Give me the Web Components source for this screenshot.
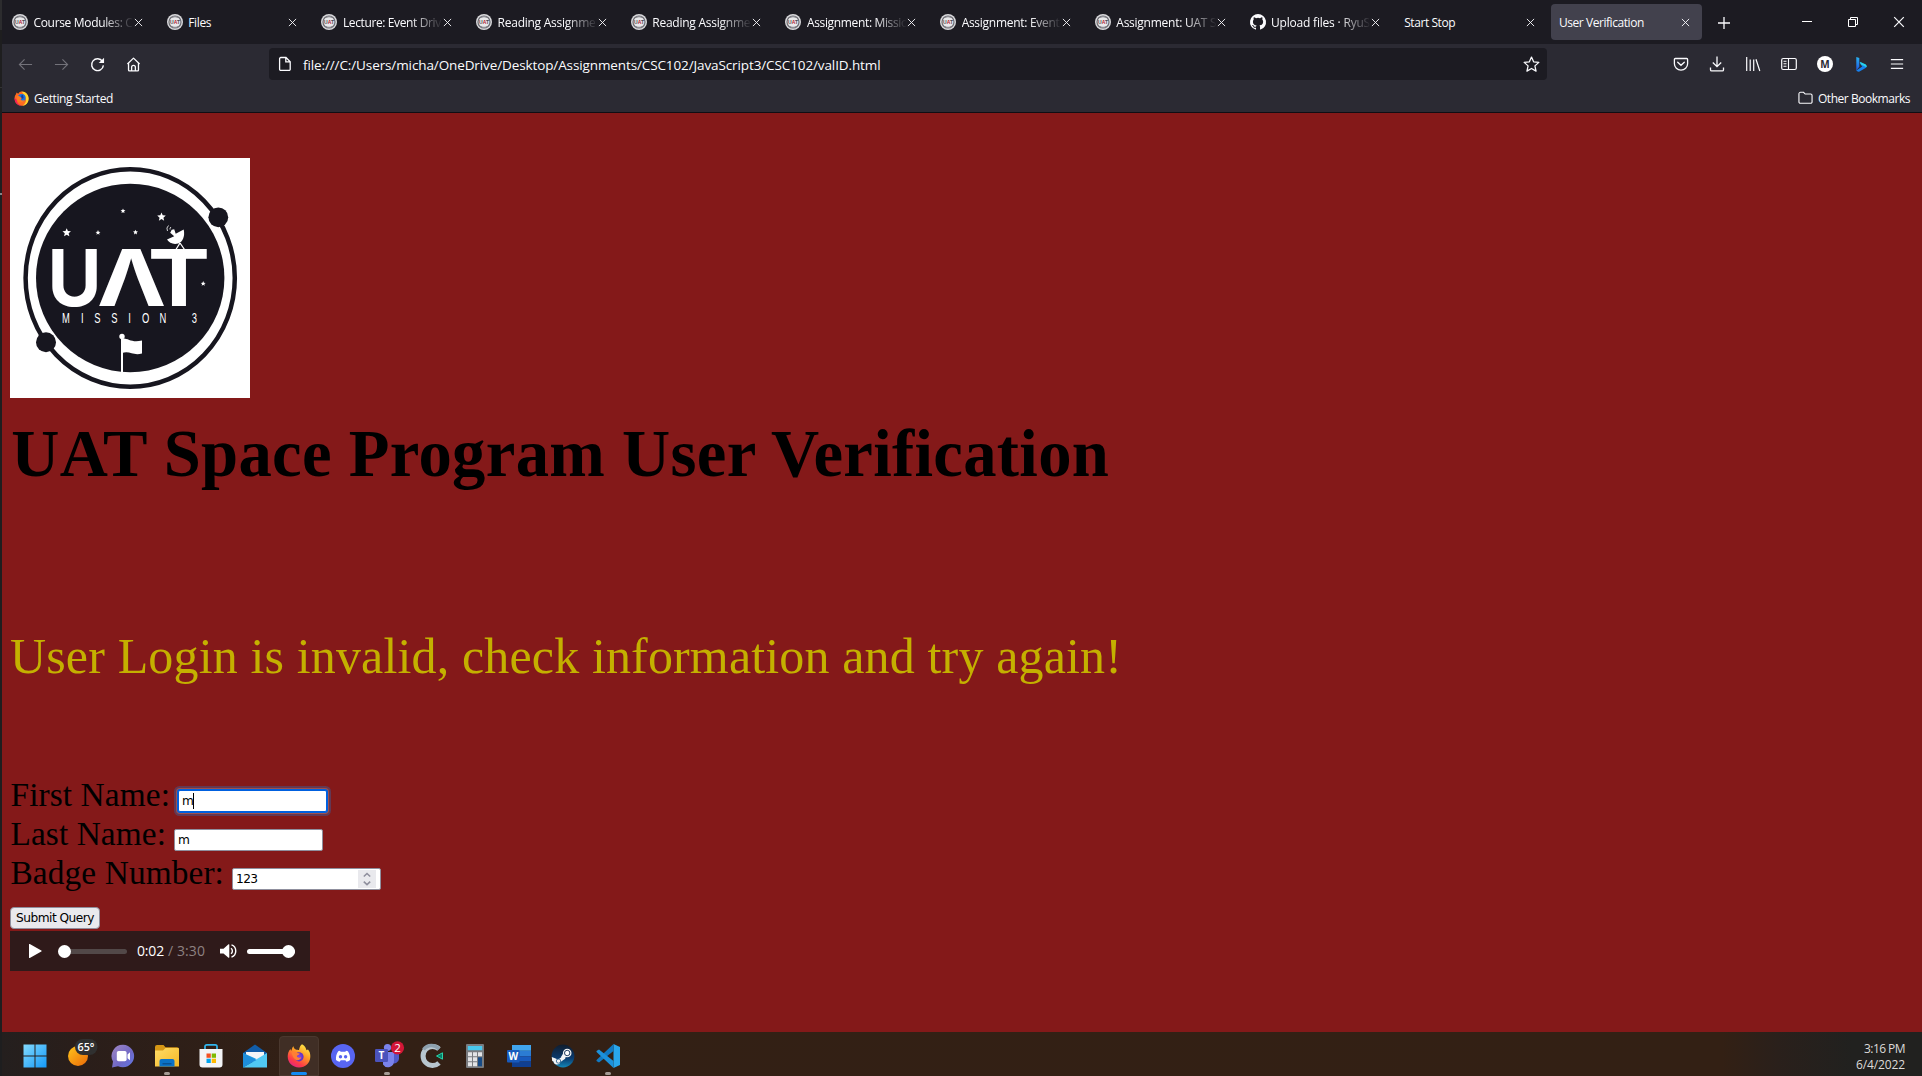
<!DOCTYPE html>
<html lang="en"><head><meta charset="utf-8"><title>User Verification</title>
<style>html,body{margin:0;height:100%;overflow:hidden;background:#841919}</style></head>
<body><desktop-screen></desktop-screen>
<script>
const ICONS = {
back:['0 0 16 16','<path d="M15 8H1.5M7 2.5 1.5 8 7 13.5" fill="none" stroke="#73727a" stroke-width="1.2"/>'],
forward:['0 0 16 16','<path d="M1 8h13.5M9 2.5 14.500 8 9 13.500" fill="none" stroke="#73727a" stroke-width="1.2"/>'],
reload:['0 0 16 16','<path d="M13.300 4.700A6.300 6.300 0 1 0 14.300 9" fill="none" stroke="#fbfbfe" stroke-width="1.5"/><path d="M15 .8v5.700H9.300z" fill="#fbfbfe"/>'],
home:['0 0 16 16','<path d="M1.500 7.500 8 1.200l6.500 6.300M2.700 6.500v7.300a1 1 0 0 0 1 1h8.600a1 1 0 0 0 1-1V6.500M6 14.500V11a2 2 0 0 1 4 0v3.500" fill="none" stroke="#fbfbfe" stroke-width="1.400" stroke-linejoin="round"/>'],
page:['0 0 16 16','<path d="M3.800 1.500h5.200l4.200 4.200v7.500a1.200 1.200 0 0 1-1.200 1.200H3.800a1.200 1.200 0 0 1-1.200-1.200V2.700a1.200 1.200 0 0 1 1.200-1.200zM8.800 1.500v4.400h4.300" fill="none" stroke="#fbfbfe" stroke-width="1.300"/>'],
star:['0 0 16 16','<path d="m8 1 2 4.500 4.900.5-3.700 3.300 1.100 4.900L8 11.700l-4.300 2.500 1.100-4.900L1.100 6 6 5.500z" fill="none" stroke="#fbfbfe" stroke-width="1.200" stroke-linejoin="round"/>'],
pocket:['0 0 16 16','<path d="M2.300 2.500h11.400a.9.9 0 0 1 .9.900V7.800a6.600 6.300 0 0 1-13.200 0V3.400a.9.900 0 0 1 .9-.900zM4.700 6.200 8 9.300l3.300-3.100" fill="none" stroke="#fbfbfe" stroke-width="1.300" stroke-linecap="round"/>'],
download:['0 0 16 16','<path d="M8 .5v10M3.800 6.500 8 10.700l4.200-4.200M1.500 11.500v2.200a1.200 1.200 0 0 0 1.200 1.200h10.600a1.200 1.200 0 0 0 1.200-1.200v-2.200" fill="none" stroke="#fbfbfe" stroke-width="1.300"/>'],
library:['0 0 16 16','<path d="M1.700 1v14M5.200 3.500V15M8.700 3.500V15M11 3.300 14.800 15" fill="none" stroke="#fbfbfe" stroke-width="1.200"/>'],
sidebar:['0 0 16 16','<rect x=".7" y="2.500" width="14.600" height="11" rx="1.500" fill="none" stroke="#fbfbfe" stroke-width="1.200"/><path d="M7.500 2.500v11M2.500 5.300h3M2.500 7.800h3M2.500 10.300h3" stroke="#fbfbfe" stroke-width="1.100"/>'],
account:['0 0 16 16','<circle cx="8" cy="8" r="8" fill="#fff"/><text x="8" y="11.700" text-anchor="middle" font-family="Open Sans,sans-serif" font-weight="700" font-size="10" fill="#2b2a33">M</text>'],
bing:['0 0 16 16','<defs><linearGradient id="b" x1="0" y1="0" x2="0" y2="1"><stop offset="0" stop-color="#28b5f4"/><stop offset="1" stop-color="#2054df"/></linearGradient></defs><path d="M3.300 1 6.300 2v8.700L3.300 14.500z" fill="url(#b)"/><path d="M3.300 14.500 9.300 10.500 8 9 6.500 6l6.200 2.700c1 1 .9 2.600-.1 3.400L6.500 15.500c-1.200.5-2.600 0-3.200-1z" fill="#1681ef"/><path d="m7 5.800 5.800 2.600c.9.800 1.200 2 .7 2.900L9.100 9 7.700 8.200z" fill="#28d4ea"/>'],
menu:['0 0 16 16','<path d="M1 3h14M1 8h14M1 13h14" stroke="#fbfbfe" stroke-width="1.200"/>'],
folder:['0 0 16 16','<path d="M1 3.200A1.700 1.700 0 0 1 2.700 1.500h3.200l1.800 2h5.800a1.500 1.500 0 0 1 1.500 1.500v7.500a1.500 1.500 0 0 1-1.500 1.500h-11A1.500 1.500 0 0 1 1 12.500z" fill="none" stroke="#fbfbfe" stroke-width="1.200"/>'],
close:['0 0 10 10','<path d="m1 1 8 8M9 1 1 9" stroke="#fbfbfe" stroke-width="1"/>'],
plus:['0 0 14 14','<path d="M7 1v12M1 7h12" stroke="#fbfbfe" stroke-width="1.300"/>'],
min:['0 0 10 10','<path d="M0 4.500h10" stroke="#fff"/>'],
restore:['0 0 10 10','<path d="M.5 2.500h7v7h-7zM2.500 2.500v-2h7v7h-2" fill="none" stroke="#fff"/>'],
uat:['0 0 16 16','<circle cx="8" cy="8" r="8" fill="#d9d9dc"/><circle cx="8" cy="8" r="6" fill="#e9e9eb" stroke="#6d6d74" stroke-width="1.200"/><path d="M5 3.600a5.300 5.300 0 0 1 6 0M5 12.400a5.300 5.300 0 0 0 6 0" fill="none" stroke="#8d8d93" stroke-width="1.200"/><text x="3" y="10.200" textLength="10" lengthAdjust="spacingAndGlyphs" font-family="Liberation Sans,sans-serif" font-weight="700" font-size="6" fill="#4a4a50">U<tspan fill="#b52231">A</tspan>T</text>'],
github:['0 0 16 16','<path fill="#fbfbfe" d="M8 0a8 8 0 0 0-2.530 15.590c.4.070.55-.17.55-.38v-1.490c-2.010.37-2.530-.49-2.690-.94-.09-.23-.48-.94-.82-1.130-.28-.15-.68-.52-.01-.53.63-.01 1.080.58 1.230.82.72 1.210 1.870.87 2.330.66.070-.52.28-.87.51-1.070-1.780-.2-3.640-.89-3.640-3.950 0-.87.310-1.590.82-2.150-.080-.2-.36-1.020.080-2.120 0 0 .67-.21 2.200.82a7.600 7.600 0 0 1 4 0c1.530-1.040 2.200-.82 2.200-.82.44 1.100.16 1.920.080 2.120.51.56.82 1.270.82 2.150 0 3.070-1.870 3.750-3.650 3.950.29.25.54.73.54 1.480v2.200c0 .21.15.46.55.38A8 8 0 0 0 8 0z"/>'],
firefox:['0 0 24 24','<defs><linearGradient id="f" x1=".8" y1="0" x2=".2" y2="1"><stop offset="0" stop-color="#fff04a"/><stop offset=".4" stop-color="#ff9a24"/><stop offset=".75" stop-color="#ff3b47"/><stop offset="1" stop-color="#e0218b"/></linearGradient><radialGradient id="g"><stop offset="0" stop-color="#8a4be8"/><stop offset="1" stop-color="#5b2fc0"/></radialGradient></defs><path d="M15 .300c3 1.500 4 4 4.500 5.900 1-.2 1.300-1 1.300-1 2 2 2.700 5 2.500 7.800C23 19 18.500 23.500 12 23.500S.7 18.700.7 12.600c0-3 1-5.800 2.800-7.600l.6 2C5 5.500 5.300 3 6.500 2.300c0 1.800 1.400 3 2.900 3.400 1.600 0 2.300.3 2.600.3C12.500 3.500 13.300 1.500 15 .300z" fill="url(#f)"/><circle cx="12" cy="12.800" r="4.600" fill="url(#g)"/><path d="M4.500 8.500c2-1.300 4.500-.8 6 .5 1 .2 2 .3 2.300.7-.4 1.200-2.600 1.300-3 2.300.4 1.500 2.500 2.300 4.500 1.300-.7 2.400-3.300 3.700-5.800 2.400C6 14 5.300 11 4.500 8.500z" fill="#ff7f35"/>'],
firefoxold:['0 0 16 16','<path d="M8 .4c4 0 7.500 3 7.500 7.500S12 15.700 8 15.700.6 12.500.6 8c0-2 .6-3.500 1.500-4.500l.6-1.800L4.500 3C5.500 1 6.500.6 8 .4z" fill="#ff6b21"/><path d="M8 .4c4.500 0 7.600 3.500 7.600 7.500 0 4.500-3 7.500-6.500 7.800 3-2 4.500-5 3.500-8C12 5 10 3 8 .4z" fill="#ffd52e"/><path d="M.6 7.500c0 5 3.500 8.200 7.600 8.200-3.200-1-5.500-3.500-5.600-6.700z" fill="#f5195f"/><circle cx="8.200" cy="7.300" r="4.200" fill="#1974dd"/><path d="M3 5.500c2-.5 3.500 0 4.200 1.500L9 7.500 7 9c1 1.500 3 1.300 4.500.3-.8 2.200-3 3.200-5 2.700C3.500 11 3 8.500 3 5.500z" fill="#ff7b22"/><path d="m7.500 5 2-1 .7 3.500-2 1z" fill="#173f9b"/>'],
start:['0 0 24 24','<defs><linearGradient id="s" x1="0" y1="0" x2="1" y2="1"><stop offset="0" stop-color="#83dafd"/><stop offset="1" stop-color="#1398f8"/></linearGradient></defs><path d="M.5.500h11v11H.5zM12.500.500h11v11h-11zM.5 12.500h11v11H.5zM12.500 12.500h11v11h-11z" fill="url(#s)"/>'],
weather:['0 0 32 28','<defs><linearGradient id="w" x1="0" y1="0" x2="1" y2="1"><stop offset="0" stop-color="#ffc51c"/><stop offset="1" stop-color="#ea6908"/></linearGradient></defs><circle cx="11" cy="17" r="10" fill="url(#w)"/><rect x="8" y="0" width="22.500" height="16" rx="8" fill="#303030"/><text x="10.500" y="12" textLength="17" lengthAdjust="spacingAndGlyphs" font-family="Open Sans,sans-serif" font-weight="600" font-size="11" fill="#fff">65°</text>'],
chat:['0 0 24 24','<defs><linearGradient id="c" x1="0" y1="0" x2="1" y2="1"><stop offset="0" stop-color="#a287c3"/><stop offset=".6" stop-color="#6f68c6"/><stop offset="1" stop-color="#6079e8"/></linearGradient></defs><path d="M12.200.700A11.300 11.300 0 1 1 7 22.200L1 23.500l1-6A11.300 11.300 0 0 1 12.200.700z" fill="url(#c)"/><rect x="5.800" y="7" width="9.800" height="10.300" rx="1.800" fill="#fff"/><path d="M16.500 10.500 19 8.300v8l-2.500-2z" fill="#fff"/>'],
explorer:['0 0 24 24','<defs><linearGradient id="e" x1="0" y1="0" x2="1" y2="1"><stop offset="0" stop-color="#ffdc68"/><stop offset="1" stop-color="#f6b824"/></linearGradient></defs><path d="M0 3a2 2 0 0 1 2-2h6.500l2 2.200H22a2 2 0 0 1 2 2V10H0z" fill="#d69715"/><path d="M0 6.500h8L10.500 4H23a1 1 0 0 1 1 1v17.500H0z" fill="url(#e)"/><path d="M4.500 22.500V17a2 2 0 0 1 2-2h11a2 2 0 0 1 2 2v5.500z" fill="#0b72c7"/><path d="M7.500 19h9v1.500h-9z" fill="#095294"/>'],
store:['0 0 24 24','<path d="M6 6V2.500A1.700 1.700 0 0 1 7.700.800h8.600A1.700 1.700 0 0 1 18 2.500V6" fill="none" stroke="#32b7ef" stroke-width="1.700"/><path d="M.5 5h23v15.500a3 3 0 0 1-3 3h-17a3 3 0 0 1-3-3z" fill="#f3f4f6"/><path d="M7.500 9.500h4.300v4.300H7.500z" fill="#f25022"/><path d="M12.700 9.500H17v4.300h-4.300z" fill="#7fba00"/><path d="M7.500 14.700h4.300V19H7.500z" fill="#00a4ef"/><path d="M12.700 14.700H17V19h-4.300z" fill="#ffb900"/>'],
mail:['0 0 24 24','<path d="M0 9 12 .500 24 9v3H0z" fill="#115da9"/><path d="M3 8h18v10H3z" fill="#f4f5f7"/><path d="M0 9v14.500L13.500 15z" fill="#21a5e7"/><path d="M24 9 0 23.500h24z" fill="#50c9f4"/><path d="M0 9 13.500 16 0 23.500z" fill="#1d8edb"/>'],
discord:['0 0 24 24','<circle cx="12" cy="12" r="12" fill="#5865f2"/><path d="M9 6.700 7.200 7.300C5.500 9.700 4.700 12.500 5 16c1.300 1 2.500 1.500 3.700 1.800l1-1.500h4.700l1 1.500c1.200-.3 2.400-.8 3.700-1.800.3-3.500-.6-6.300-2.200-8.700L15 6.700l-.6 1H9.600z" fill="#fff"/><circle cx="9.500" cy="12.800" r="1.700" fill="#5865f2"/><circle cx="14.600" cy="12.800" r="1.700" fill="#5865f2"/>'],
teams:['0 0 29 27','<circle cx="12.500" cy="6.500" r="3.600" fill="#7b83eb"/><circle cx="21" cy="7.500" r="3" fill="#5059c9"/><path d="M17 11h7v7a5 5 0 0 1-7 4z" fill="#5059c9"/><path d="M8 11h11v9a6 6 0 0 1-11 3.500z" fill="#7b83eb"/><rect x="0" y="8" width="13" height="13" rx="1.200" fill="#4b53bc"/><text x="6.500" y="18.200" text-anchor="middle" font-family="Open Sans,sans-serif" font-weight="700" font-size="10" fill="#fff">T</text><circle cx="22.500" cy="6.800" r="6.600" fill="#d31637"/><text x="22.500" y="11" text-anchor="middle" font-family="Open Sans,sans-serif" font-size="11.500" fill="#fff">2</text>'],
crecorder:['0 0 24 24','<path d="M20 5A9.500 9.500 0 1 0 20 19" fill="none" stroke="#b8c6cf" stroke-width="5"/><path d="M4.500 5.500A10 10 0 0 1 20 5" fill="none" stroke="#8ea0ad" stroke-width="3.500"/><path d="m17.500 12 6-3.200v6.400z" fill="#087c68" stroke="#27d3a8" stroke-width="1"/>'],
calc:['0 0 24 24','<rect x="3" y="0" width="18" height="24" rx="1" fill="#797b7f"/><rect x="4.800" y="2" width="14.400" height="4.200" fill="#49c8ed"/><path d="M5 8.300h4v4H5zM10 8.300h4v4h-4zM15 8.300h4v4h-4zM5 13.300h4v4H5zM10 13.300h4v4h-4zM5 18.300h4v4H5zM10 18.300h4v4h-4z" fill="#e3e4e6"/><path d="M15 13.300h4v9h-4z" fill="#174b86"/>'],
word:['0 0 24 24','<path d="M5 1h19v5.800H5z" fill="#41a5ee"/><path d="M5 6.800h19v5.400H5z" fill="#2b7cd3"/><path d="M5 12.200h19v5.400H5z" fill="#185abd"/><path d="M5 17.600h19V23H5z" fill="#103f91"/><rect x="0" y="6" width="12.600" height="12.500" rx="1" fill="#185abd"/><text x="6.300" y="16" text-anchor="middle" font-family="Open Sans,sans-serif" font-weight="700" font-size="10" fill="#fff">W</text>'],
steam:['0 0 24 24','<defs><linearGradient id="t" x1="0" y1="0" x2="0" y2="1"><stop offset="0" stop-color="#111d2e"/><stop offset=".6" stop-color="#0a3b6f"/><stop offset="1" stop-color="#1387b8"/></linearGradient></defs><circle cx="12" cy="12" r="11.400" fill="url(#t)"/><path d="m.8 13 6.300 2.500L12 12l2.500 2.500-5 3.500a3.600 3.600 0 0 1-7-.500L1.200 17z" fill="#f2f3f5"/><path d="m10 13 3-5 4 4-5 3z" fill="#f2f3f5"/><circle cx="16.200" cy="9" r="4.300" fill="#f2f3f5"/><circle cx="16.200" cy="9" r="2.700" fill="#fff" stroke="#233f62" stroke-width="1"/><circle cx="7.500" cy="17" r="2.200" fill="none" stroke="#20598b" stroke-width=".8"/>'],
vscode:['0 0 24 24','<path d="M17.500 0 24 3v18l-6.500 3z" fill="#29a6ec"/><path d="M17.500 0v7L3 18.500.8 17.300a1 1 0 0 1 0-1.500z" fill="#1179c2"/><path d="M17.500 24v-7L3 5.500.8 6.700a1 1 0 0 0 0 1.500z" fill="#1c91db"/>'],
play:['0 0 14 14','<path d="M1 .500v13a.5.500 0 0 0 .8.400l11.500-6.300a.7.700 0 0 0 0-1.200L1.800.100A.5.500 0 0 0 1 .500z" fill="#fff"/>'],
volume:['0 0 16 14','<path d="M0 4.700h3.500L8.500.300a.5.500 0 0 1 .8.400v12.600a.5.500 0 0 1-.8.400L3.500 9.500H0z" fill="#fff"/><path d="M11 4.200a3.500 3.500 0 0 1 0 5.600M11.500.900a6.500 6.500 0 0 1 0 12.200" fill="none" stroke="#fff" stroke-width="1.400"/>'],
spin:['0 0 18 18','<rect width="18" height="18" fill="#e9e9ed"/><path d="m5.800 6.500 3.200-3 3.200 3M5.800 11.700l3.200 3 3.200-3" fill="none" stroke="#8f8f9d" stroke-width="1.600"/>']
};
class Base extends HTMLElement{
  connectedCallback(){ if(!this.shadowRoot) this.attachShadow({mode:'open'}).innerHTML=this.render(); this.ready&&this.ready(); }
}
const def=(name,render,ready)=>customElements.define(name,class extends Base{render(){return render(this)} ready(){ready&&ready(this)}});

def('ui-icon',el=>{const [vb,body]=ICONS[el.getAttribute('name')];const w=el.getAttribute('w')||16,h=el.getAttribute('h')||w;
 return `<style>:host{display:block;flex:none}svg{display:block;overflow:visible}</style><svg width="${w}" height="${h}" viewBox="${vb}" preserveAspectRatio="none">${body}</svg>`});

/* Single line of text, tracked so that it takes the given width. */
def('fit-text',el=>`<style>:host{display:block;white-space:pre;flex:none}span{display:inline-block}</style><span><slot></slot></span>`,
 el=>{const s=el.shadowRoot.querySelector('span'),w=+el.getAttribute('w');if(!w)return;
  const n=el.textContent.length,nat=s.getBoundingClientRect().width;s.style.letterSpacing=((w-nat)/n)+'px'});

def('browser-tab',el=>{const ic=el.getAttribute('icon');
 return `<style>:host{display:flex;flex:none;box-sizing:border-box;width:150.700px;height:36px;margin:4px 2px;padding:0 12px 0 8px;border-radius:4px;align-items:center;color:#fbfbfe;font:12px/18px "Open Sans","Noto Sans",sans-serif}
 :host([active]){background:#42414d}
 .t{flex:1;min-width:0;overflow:hidden;margin-top:2px;${el.hasAttribute('long')?'-webkit-mask-image:linear-gradient(90deg,#000 calc(100% - 32px),transparent)':''}}
 .i{margin-right:5.500px}</style>${ic?`<ui-icon class="i" name="${ic}"></ui-icon>`:''}
 <div class="t"><fit-text w="${el.getAttribute('w')}">${el.getAttribute('label')}</fit-text></div><ui-icon name="close" w="9"></ui-icon>`});

const TABS=[['uat','Course Modules: C',99,1],['uat','Files',23],['uat','Lecture: Event Driv',98,1],['uat','Reading Assignme',98,1],['uat','Reading Assignme',98,1],['uat','Assignment: Missio',101,1],['uat','Assignment: Event',98,1],['uat','Assignment: UAT S',100,1],['github','Upload files · RyuS',99,1],['','Start Stop',51],['','User Verification',85,0,1]];
def('tab-strip',()=>`<style>:host{display:flex;height:44px;background:#1c1b22}.plus{width:40px;margin-top:2px;display:flex;align-items:center;justify-content:center}.win{margin-left:auto;display:flex}.win div{width:46px;height:44px;display:flex;align-items:center;justify-content:center}</style>
 ${TABS.map(t=>`<browser-tab icon="${t[0]}" label="${t[1]}" w="${t[2]}" ${t[3]?'long':''} ${t[4]?'active':''}></browser-tab>`).join('')}
 <div class="plus"><ui-icon name="plus" w="14"></ui-icon></div>
 <div class="win"><div><ui-icon name="min" w="10"></ui-icon></div><div><ui-icon name="restore" w="10"></ui-icon></div><div><ui-icon name="close" w="12"></ui-icon></div></div>`);

def('nav-bar',()=>`<style>:host{display:flex;height:40px;background:#2b2a33;padding:0 7px 0 5.500px;align-items:center;box-sizing:border-box}
 .c{width:36px;height:36px;display:flex;align-items:center;justify-content:center;flex:none}
 .url{display:flex;align-items:center;box-sizing:border-box;width:1278px;height:32px;margin-left:117.500px;padding:0 7.500px 0 8px;border-radius:4px;background:#1c1b22;color:#fbfbfe;font:13.500px/20px "Open Sans","Noto Sans",sans-serif}
 .url fit-text{margin-left:10px;margin-top:2px}.url .s{margin-left:auto}.r{display:flex;margin-left:auto}</style>
 ${['back','forward','reload','home'].map(n=>`<div class="c"><ui-icon name="${n}" w="15"></ui-icon></div>`).join('')}
 <div class="url"><ui-icon name="page" w="16"></ui-icon><fit-text w="577.500">file:///C:/Users/micha/OneDrive/Desktop/Assignments/CSC102/JavaScript3/CSC102/valID.html</fit-text><ui-icon class="s" name="star" w="17"></ui-icon></div>
 <div class="r">${['pocket','download','library','sidebar','account','bing','menu'].map(n=>`<div class="c"><ui-icon name="${n}" w="${n=='menu'?14:16}"></ui-icon></div>`).join('')}</div>`);

def('bookmarks-bar',()=>`<style>:host{display:flex;height:29px;background:#2b2a33;border-bottom:1px solid #0f0e14;box-sizing:border-box;padding:0 12px 0 12px;align-items:center;justify-content:space-between;color:#fbfbfe;font:12px/18px "Open Sans","Noto Sans",sans-serif}
 div{display:flex;align-items:center}fit-text{margin-left:5px;margin-top:2px}</style>
 <div><ui-icon name="firefoxold" w="15"></ui-icon><fit-text w="79">Getting Started</fit-text></div>
 <div><ui-icon name="folder" w="15" h="14"></ui-icon><fit-text w="92">Other Bookmarks</fit-text></div>`);

const star=(x,y,r)=>{let p='';for(let i=0;i<10;i++){const a=-Math.PI/2+i*Math.PI/5,q=i%2?r*.45:r;p+=(x+q*Math.cos(a)).toFixed(2)+','+(y+q*Math.sin(a)).toFixed(2)+' '}return `<polygon points="${p}" fill="#fff"/>`};
def('mission-logo',()=>`<style>:host{display:block;width:240px;height:240px;background:#fff}svg{display:block}</style>
 <svg width="240" height="240" viewBox="0 0 240 240"><ellipse cx="120.200" cy="120" rx="104.600" ry="108.700" fill="none" stroke="#17161f" stroke-width="4.500"/><circle cx="120.200" cy="120" r="94.200" fill="#17161f"/><circle cx="208.300" cy="59.300" r="9.900" fill="#17161f"/><circle cx="36" cy="184.300" r="10" fill="#17161f"/>
 ${star(56.7,74.7,4.5)}${star(88,74.7,2.6)}${star(113,53,2.6)}${star(125.5,74.3,2.6)}${star(151.5,59,4.5)}${star(193.2,125.7,2.6)}
 <g fill="#fff" font-family="Inter,sans-serif" font-weight="700" font-size="78.500">
 <text transform="translate(37.600 147.800) scale(.94 1)">U</text><text transform="translate(87 147.800) scale(1.180 1)">Λ</text><text transform="translate(137.800 147.800) scale(1.190 1)">T</text></g>
 <text transform="translate(0 164.500) scale(.68 1)" x="82.400 106.300 128.400 153.400 176 199.600 225 247 271.300" text-anchor="middle" font-family="Liberation Sans,sans-serif" font-size="13.800" fill="#fff">MISSION 3</text>
 <path d="M173.700 71.500c1.500 7-1 12.500-5.500 14-5 1.500-9-.8-11.200-4l7.200-3.300-4-3.500 1.500-3 2.500-.5 1.500 4.500z" fill="#fff"/><path d="m170 85-5 8M170 85l5.500 8" stroke="#fff" stroke-width="1.300" fill="none"/><path d="M157.500 73a4.500 4.500 0 0 1 1-5.500M160 71.500a2.500 2.500 0 0 1 1-2.500" stroke="#fff" stroke-width=".8" fill="none"/>
 <path d="M112 179v35" stroke="#fff" stroke-width="2"/><circle cx="112" cy="178.500" r="2.700" fill="#fff"/><path d="M112.500 180.500c7 0 9 4.500 19.500 2v13c-9 2.500-12-3-20-.5z" fill="#fff"/></svg>`);

def('form-row',el=>`<style>:host{display:flex;height:39px;align-items:flex-start;font:33.330px/39px "Liberation Serif",serif;color:#000}
 .l{flex:none;width:${el.getAttribute('lw')}px}.l fit-text{padding-left:.500px}
 .f{flex:none;box-sizing:border-box;width:149px;height:22px;margin-top:14.700px;background:#fff;border:1px solid #8f8f9d;border-radius:2px;display:flex;align-items:center;padding:0 4px 0 3px;font:12.200px/18px "DejaVu Sans",sans-serif;color:#000}
 .f fit-text{margin-top:1px}
 :host([focus]) .f{border-color:#0060df;box-shadow:0 0 0 1px #0060df,0 0 0 2px #a0504c,0 0 0 4px #633854}
 i{width:1px;height:16px;background:#000}ui-icon{margin-left:auto}</style>
 <div class="l"><fit-text w="${el.getAttribute('tw')}">${el.getAttribute('label')}</fit-text></div><div class="f"><fit-text w="${el.getAttribute('vw')}">${el.getAttribute('value')}</fit-text>${el.hasAttribute('focus')?'<i></i>':''}${el.hasAttribute('spin')?'<ui-icon name="spin" w="18"></ui-icon>':''}</div>`);

def('audio-player',()=>`<style>:host{display:flex;align-items:center;width:300px;height:40px;box-sizing:border-box;background:#2f1a1a;padding:1px 0 0 18px;font:14px/20px "Open Sans","Noto Sans",sans-serif}
 .b{height:5px;border-radius:3px;display:flex;align-items:center}.k{width:13px;height:13px;border-radius:50%;background:#fff}
 .s{width:69px;margin-left:16px;background:#524848}.v{width:48px;margin-left:11px;background:#fff;justify-content:flex-end;border-radius:3px}
 .a{color:#fff;margin-left:10px}.d{color:#8d8181;margin-left:4px}.o{margin-left:15px}</style>
 <ui-icon name="play" w="14"></ui-icon><div class="b s"><div class="k"></div></div><fit-text class="a" w="27">0:02</fit-text><fit-text class="d" w="37">/ 3:30</fit-text><ui-icon class="o" name="volume" w="16" h="14"></ui-icon><div class="b v"><div class="k"></div></div>`);

def('verify-page',()=>`<style>:host{display:flex;flex-direction:column;align-items:flex-start;flex:1;min-height:0;background:#841919;padding:45px 8px 0;box-sizing:border-box;font-family:"Liberation Serif",serif;color:#000}
 h1{margin:18.500px 0 0;padding-left:1.200px;font-size:66.670px;line-height:74px;font-weight:700}
 .m{margin-top:137.500px;font-size:50px;line-height:56px;color:#c4b000}.rows{margin-top:91.300px}
 button{margin:14.700px 0 2px;box-sizing:border-box;width:90px;height:22px;padding:1px 0 0;border:1px solid #8f8f9d;border-radius:4px;background:#e9e9ed;color:#000;display:flex;align-items:center;justify-content:center;font:12.200px/18px "DejaVu Sans",sans-serif}</style>
 <mission-logo></mission-logo><h1><fit-text w="1098">UAT Space Program User Verification</fit-text></h1>
 <div class="m"><fit-text w="1112">User Login is invalid, check information and try again!</fit-text></div>
 <div class="rows"><form-row focus lw="168" tw="159.500" label="First Name:" value="m" vw="11"></form-row><form-row lw="164" tw="155.500" label="Last Name:" value="m" vw="11"></form-row><form-row spin lw="222" tw="213.500" label="Badge Number:" value="123" vw="21.500"></form-row></div>
 <button><fit-text w="78">Submit Query</fit-text></button><audio-player></audio-player>`);

const TASKS=[['start',24],['weather',32,28],['chat',24],['explorer',24],['store',24],['mail',24],['firefox',24],['discord',24],['teams',29,27],['crecorder',24],['calc',24],['word',24],['steam',24],['vscode',24]];
def('task-bar',()=>`<style>:host{display:flex;height:44px;padding:0 17px 0 10.500px;box-sizing:border-box;background:linear-gradient(90deg,#241f1e 0,#2a1e1a 80px,#332015 300px,#332014 1720px,#2a201b 1775px,#21211f 1850px);color:#dcdad8;font:12px/16px "Open Sans","Noto Sans",sans-serif}
 .c{width:44.080px;height:44px;display:flex;flex-direction:column;align-items:center;flex:none}
 .b{width:40px;height:40px;margin-top:4px;box-sizing:border-box;border-radius:4px 4px 0 0;display:flex;flex-direction:column;align-items:center;border:1px solid transparent;position:relative}
 .on .b{background:#402e25;border-color:#4a382e}.b ui-icon{margin-top:7px}.weather ui-icon{margin-top:2px;margin-left:8px}.teams ui-icon{margin-top:4px;margin-left:5px}
 .b i{position:absolute;bottom:0;width:6px;height:3px;border-radius:2px;background:#a69b95}.on .b i{width:16px;background:#118bf4}
 .t{margin-left:auto;padding-top:9px;display:flex;flex-direction:column;align-items:flex-end}</style>
 ${TASKS.map(([n,w,h])=>`<div class="c ${n} ${n=='firefox'?'on':''}"><div class="b"><ui-icon name="${n}" w="${w}" h="${h||w}"></ui-icon>${['explorer','firefox','teams','vscode'].includes(n)?'<i></i>':''}</div></div>`).join('')}
 <div class="t"><fit-text w="41">3:16 PM</fit-text><fit-text w="49">6/4/2022</fit-text></div>`);

def('desktop-screen',()=>`<style>:host{display:flex;width:1922px;height:1076px;background:#1e1d1e}
 .edge{width:2px;flex:none;background:linear-gradient(#2c2c2e 30px,#1e1e1f 30px 87px,#333 87px 88px,#1e1e1f 88px 193px,#85858a 193px 195px,#1e1e1f 195px)}
 main{flex:1;min-width:0;display:flex;flex-direction:column}</style><div class="edge"></div><main><tab-strip></tab-strip><nav-bar></nav-bar><bookmarks-bar></bookmarks-bar><verify-page></verify-page><task-bar></task-bar></main>`);
</script></body></html>
